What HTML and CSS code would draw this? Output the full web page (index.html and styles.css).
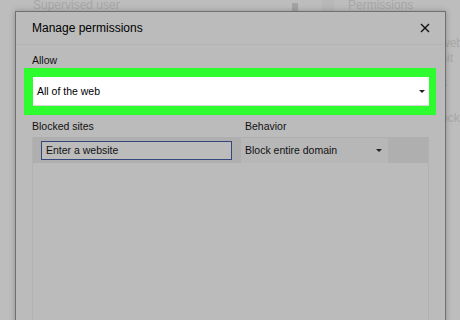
FILE: index.html
```html
<!DOCTYPE html>
<html lang="en">
<head>
    <meta charset="UTF-8">
    <title>Manage permissions</title>
    <link rel="stylesheet" href="styles.css">
</head>
<body>
    <div class="page">
        <div class="page-row">
            <span class="page-user">Supervised user</span>
            <span class="page-icon"></span>
            <span class="page-tab"></span>
            <span class="page-perm">Permissions</span>
        </div>
        <div class="page-side">
            <div class="side-line side-web">web</div>
            <div class="side-line side-sites">sit</div>
            <div class="side-line side-s">s</div>
            <div class="side-line side-block">ock</div>
        </div>
    </div>

    <div class="dialog">
        <div class="dialog-header">
            <h1>Manage permissions</h1>
            <svg class="close" width="10" height="10" viewBox="0 0 10 10">
                <path d="M1 1 L9 9 M9 1 L1 9" stroke="#111111" stroke-width="1.4" fill="none"/>
            </svg>
        </div>

        <div class="dialog-body">
            <div class="field-label">Allow</div>
            <div class="highlight">
                <div class="allow-select">
                    <span>All of the web</span>
                    <span class="caret"></span>
                </div>
            </div>

            <div class="columns">
                <div class="col-label">Blocked sites</div>
                <div class="col-label">Behavior</div>
            </div>

            <div class="sites-panel">
                <div class="sites-row">
                    <div class="site-input">Enter a website</div>
                    <div class="behavior-select">
                        <span>Block entire domain</span>
                        <span class="caret"></span>
                    </div>
                </div>
                <div class="sites-list"></div>
            </div>
        </div>
    </div>
</body>
</html>
```

FILE: styles.css
```css
body {
    margin: 0;
    width: 460px;
    height: 320px;
    overflow: hidden;
    position: relative;
    background: #bdbdbd;
    font-family: "Liberation Sans", Arial, sans-serif;
    color: #111111;
}

/* page behind the dialog */
.page {
    color: #a7a7a7;
    font-size: 12px;
}

.page-row {
    display: flex;
    align-items: center;
    height: 14px;
    margin-top: -2px;
    padding-left: 33px;
}

.page-user {
    width: 259px;
}

.page-icon {
    width: 6px;
    height: 8px;
    margin-top: 4px;
    background: #a3a3a3;
}

.page-tab {
    width: 12px;
    height: 14px;
    margin-left: 24px;
    background: #b8b8b8;
}

.page-perm {
    margin-left: 14px;
}

.page-side {
    display: flex;
    flex-direction: column;
    padding-left: 441px;
    padding-top: 24px;
}

.side-line {
    height: 15px;
    white-space: nowrap;
}

.side-s {
    margin-top: 10px;
}

.side-block {
    margin-top: 20px;
}

/* dialog */
.dialog {
    position: absolute;
    left: 15px;
    top: 11px;
    width: 429px;
    height: 330px;
    background: #bbbbbb;
    border: 1px solid #707070;
    box-shadow: 0 0 6px rgba(0, 0, 0, 0.25);
}

.dialog-header {
    display: flex;
    justify-content: space-between;
    align-items: center;
    height: 32px;
    padding: 0 15px 0 16px;
    border-bottom: 1px solid #b4b4b4;
}

.dialog-header h1 {
    margin: 0;
    font-size: 12px;
    font-weight: normal;
    color: #000000;
}

.close {
    display: block;
}

.dialog-body {
    padding: 8px 0 0 0;
}

.field-label {
    font-size: 10.5px;
    padding-left: 16px;
    height: 15px;
    line-height: 15px;
}

.highlight {
    margin: 0 9px 0 8px;
    padding: 9px 7px 9px 9px;
    background: #2efc2e;
}

.allow-select {
    display: flex;
    justify-content: space-between;
    align-items: center;
    height: 28px;
    padding: 0 4px 0 4px;
    background: #ffffff;
    border-bottom: 1px solid #d6d6d6;
    font-size: 10.5px;
    color: #000000;
}

.caret {
    width: 0;
    height: 0;
    border-left: 3px solid transparent;
    border-right: 3px solid transparent;
    border-top: 3px solid #222222;
}

.columns {
    display: grid;
    grid-template-columns: 213px 1fr;
    padding: 0 0 0 16px;
    height: 22px;
    align-items: center;
}

.col-label {
    font-size: 10.5px;
}

.sites-panel {
    margin: 0 16px 0 16px;
    border-left: 1px solid #b2b2b2;
    border-right: 1px solid #b2b2b2;
}

.sites-row {
    display: flex;
    align-items: center;
    gap: 9px;
    height: 26px;
    padding-left: 8px;
    background: #afafaf;
}

.site-input {
    width: 185px;
    height: 17px;
    line-height: 17px;
    padding-left: 4px;
    background: #bcbcbc;
    border: 1px solid #34467c;
    font-size: 10.5px;
}

.behavior-select {
    display: flex;
    justify-content: space-between;
    align-items: center;
    width: 137px;
    height: 25px;
    padding: 0 6px 0 4px;
    background: #b7b7b7;
    font-size: 10.5px;
}

.sites-list {
    height: 200px;
}
```
